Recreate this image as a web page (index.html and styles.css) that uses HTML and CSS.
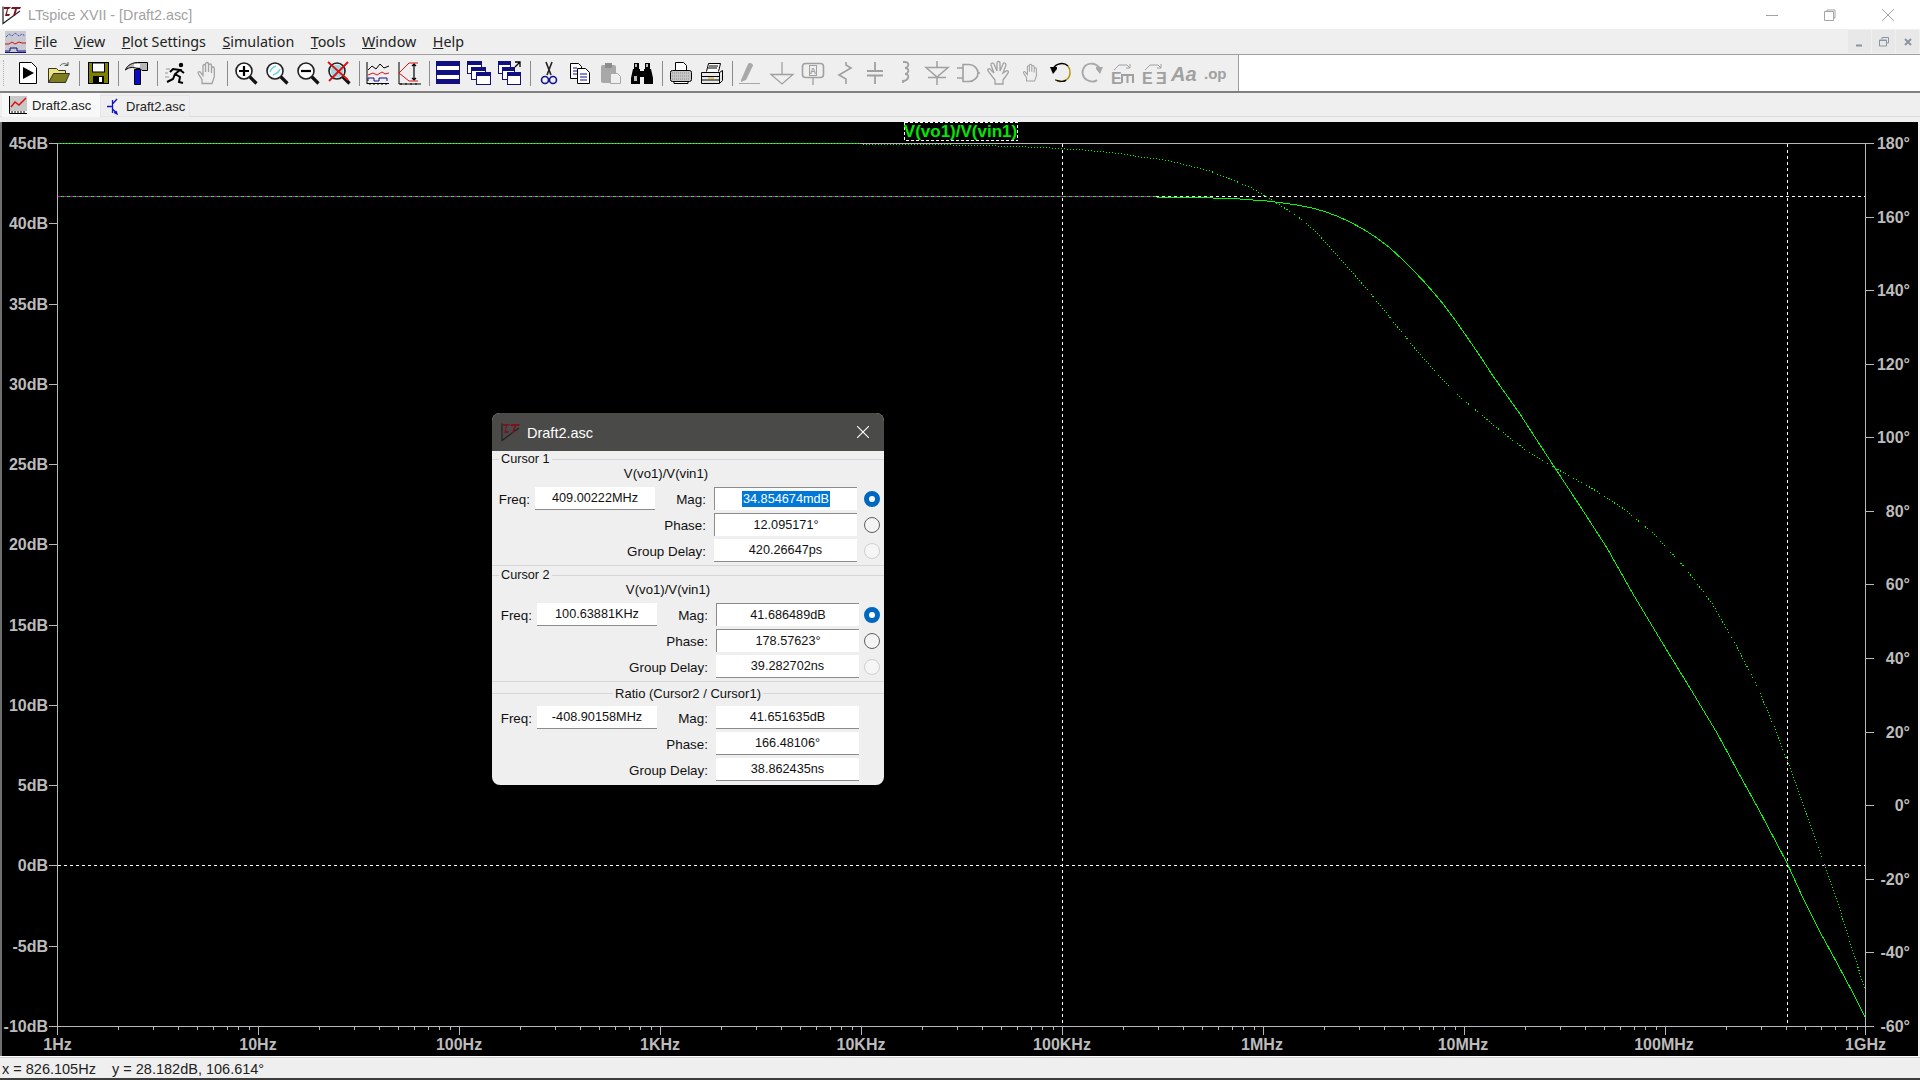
FILE: index.html
```html
<!DOCTYPE html>
<html lang="en">
	<head>
		<meta charset="UTF-8" />
		<title>LTspice XVII - [Draft2.asc]</title>
		<link rel="stylesheet" href="styles.css">
	</head>
	<body>
		<svg class="defs" width="0" height="0">
			<defs>
				<symbol id="logo" viewBox="0 0 20 20">
					<path d="M1 1.500v17L18 6" fill="none" stroke="#222" stroke-width="1.200"/>
					<path d="M2 2h7l-2 2h-1l-1 5h3l-1 2H3l2-7H2zM10 2h9l-1 2h-3l-2 7h-2l2-7h-4z" fill="#7a1420"/>
				</symbol>
				<symbol id="mag" viewBox="0 0 24 24">
					<path d="M15 15l7.500 7.500" stroke="#111" stroke-width="3.200"/>
					<circle cx="10" cy="10" r="8" fill="#fff" stroke="#222" stroke-width="1.600"/>
				</symbol>
				<symbol id="hand" viewBox="0 0 24 24">
					<path d="M7 22.500v-4L3.500 13c-1.200-2 .8-3.200 2-1.600L8 14.500V5c0-2 2.500-2 2.500 0v6V3c0-2 3-2 3 0v8V4.500c0-2 3-2 3 0V12V7.500c0-2 2.800-2 2.800 0V16l-2.300 6.500z" fill="#efefef" stroke="#a2a2a2" stroke-width="1.300"/>
				</symbol>
				<path id="decade" d="M60.500 0v3M95.800 0v3M120.900 0v3M140.400 0v3M156.300 0v3M169.800 0v3M181.400 0v3M191.700 0v3" stroke="#b9b9b9" fill="none"/>
			</defs>
		</svg>

		<header class="titlebar">
			<svg class="app-icon" width="20" height="20"><use href="#logo"/></svg>
			<span class="app-title">LTspice XVII - [Draft2.asc]</span>
			<div class="win-controls">
				<svg width="12" height="12" viewBox="0 0 12 12"><path d="M0 6.500h12" stroke="#a4a4a4"/></svg>
				<svg width="12" height="12" viewBox="0 0 12 12"><path d="M3 2V1h8v8h-1M.5 2.500h9v9h-9z" fill="none" stroke="#a4a4a4"/></svg>
				<svg width="12" height="12" viewBox="0 0 12 12"><path d="M0 0l12 12M12 0L0 12" stroke="#a4a4a4"/></svg>
			</div>
		</header>

		<nav class="menubar">
			<svg class="menu-icon" width="21" height="22" viewBox="0 0 21 22">
				<rect width="21" height="22" fill="#c9c9d2"/>
				<path d="M1 6l3-3 3 2 3-3 4 3 3-2 3 2" fill="none" stroke="#2020b0" stroke-dasharray="1 1"/>
				<path d="M0 13h4l3-2 3 2 4-2 3 1h4" fill="none" stroke="#d01010"/>
				<path d="M0 20h5v-3h7v3h9M0 21.500h21" fill="none" stroke="#101080"/>
			</svg>
			<span class="menu-item"><u>F</u>ile</span>
			<span class="menu-item"><u>V</u>iew</span>
			<span class="menu-item"><u>P</u>lot Settings</span>
			<span class="menu-item"><u>S</u>imulation</span>
			<span class="menu-item"><u>T</u>ools</span>
			<span class="menu-item"><u>W</u>indow</span>
			<span class="menu-item"><u>H</u>elp</span>
			<div class="mdi-controls">
				<span class="mdi-button"><svg width="10" height="10" viewBox="0 0 10 10"><path d="M1 8.500h6" stroke="#8b95a2" stroke-width="2"/></svg></span>
				<span class="mdi-button"><svg width="10" height="10" viewBox="0 0 10 10"><path d="M3 2V.500h6.500V6H8M.500 3h7v6h-7zM.500 3.500h7" fill="none" stroke="#8b95a2"/></svg></span>
				<span class="mdi-button"><svg width="10" height="10" viewBox="0 0 10 10"><path d="M2 2l6 6M8 2L2 8" stroke="#8b95a2" stroke-width="2"/></svg></span>
			</div>
		</nav>

		<div class="toolbar-row">
			<div class="toolbar">
				<span class="grip"></span>
				<span class="tool"><svg viewBox="0 0 24 24"><path d="M3.500 1.500h12l5 5v16h-17z" fill="#fff" stroke="#000"/><path d="M7 6l11 6-11 6z"/></svg></span>
				<span class="tool"><svg viewBox="0 0 24 24"><path d="M1.500 7.500h8l2 2h7v12h-17z" fill="#eee27a" stroke="#333"/><path d="M1.500 21.500l5-9h16l-4 9z" fill="#807c20" stroke="#333"/><path d="M13 5c2-3 5-3 8-1M21 1v3.500h-3.500" fill="none" stroke="#555"/></svg></span>
				<span class="sep"></span>
				<span class="tool"><svg viewBox="0 0 24 24"><rect x="2.500" y="1.500" width="20" height="21" fill="#808000" stroke="#000"/><rect x="6.500" y="2" width="12" height="9" fill="#fff" stroke="#000"/><rect x="7" y="15" width="11" height="7"/><rect x="13" y="16" width="3" height="5" fill="#fff"/></svg></span>
				<span class="sep"></span>
				<span class="tool"><svg viewBox="0 0 24 24"><path d="M.500 9C2 4 8 1 15 1.500h7.500v8H17l-2-2H12C8 6 4 6 .500 9z" fill="#b8b8b8" stroke="#000"/><path d="M9 3h6v3H9z" fill="#fff"/><path d="M9.500 8.500h6v15h-6z" fill="#0a0ac8" stroke="#000"/></svg></span>
				<span class="sep"></span>
				<span class="tool"><svg viewBox="0 0 24 24"><path d="M3 21l6-3 2-5 5-4-7-1-3 3M11 13l5 3-1 5 4 1M16 9l4 3" fill="none" stroke="#000" stroke-width="2"/><circle cx="17" cy="4" r="2.200"/><path d="M2 8h4M1 12h3M1 16h4" stroke="#999"/></svg></span>
				<span class="tool"><svg viewBox="0 0 24 24"><use href="#hand"/></svg></span>
				<span class="sep"></span>
				<span class="tool"><svg viewBox="0 0 24 24"><use href="#mag"/><path d="M5 10h10M10 5v10" stroke="#000" stroke-width="2.200"/></svg></span>
				<span class="tool"><svg viewBox="0 0 24 24"><use href="#mag"/><path d="M5 11c1-3 3-5 6-6M8 14c3-1 6-3 7-6" fill="none" stroke="#66d8e8" stroke-width="1.600"/></svg></span>
				<span class="tool"><svg viewBox="0 0 24 24"><use href="#mag"/><path d="M5 10h10" stroke="#000" stroke-width="2.200"/></svg></span>
				<span class="tool"><svg viewBox="0 0 24 24"><use href="#mag"/><circle cx="10" cy="10" r="6.500" fill="#9fd8e2"/><path d="M1 1l20 18M21 1L2 20" stroke="#e01010" stroke-width="1.800"/></svg></span>
				<span class="sep"></span>
				<span class="tool"><svg viewBox="0 0 24 24"><path d="M1 22.500h22M1 1v22M4 22v2M8 22v2M12 22v2M16 22v2M20 22v2" stroke="#000" fill="none"/><path d="M2 9l4-4 4 3 4-5 4 4 5-2" fill="none" stroke="#000"/><path d="M2 14l5-2 4 2 5-3 3 2 4-1" fill="none" stroke="#e01010"/><path d="M2 20v-3h6v3h5v-3h8v3" fill="none" stroke="#101090"/></svg></span>
				<span class="tool"><svg viewBox="0 0 24 24"><path d="M2 1v22h22M4 22v2M9 22v2M14 22v2M19 22v2" stroke="#000" fill="none"/><path d="M2 12L12 2h9M2 12l10 8h9" fill="none" stroke="#e01010"/><path d="M17 3v16M15 5l2-2 2 2M15 17l2 2 2-2" fill="none" stroke="#000" stroke-width="1.200"/></svg></span>
				<span class="sep"></span>
				<span class="tool"><svg viewBox="0 0 24 24"><rect x=".500" y=".500" width="23" height="22" fill="#fff" stroke="#101080"/><path d="M0 0h24v5H0zM0 9h24v5H0zM0 18h24v5H0z" fill="#101080"/></svg></span>
				<span class="tool"><svg viewBox="0 0 24 24"><rect x=".500" y=".500" width="14" height="12" fill="#fff" stroke="#101080"/><path d="M0 0h15v4H0z" fill="#101080"/><rect x="4.500" y="6.500" width="14" height="12" fill="#fff" stroke="#101080"/><path d="M4 6h15v4H4z" fill="#101080"/><rect x="9.500" y="11.500" width="14" height="12" fill="#fff" stroke="#101080"/><path d="M9 11h15v4H9z" fill="#101080"/></svg></span>
				<span class="tool"><svg viewBox="0 0 24 24"><rect x=".500" y=".500" width="12" height="12" fill="#fff" stroke="#101080"/><path d="M0 0h13v4H0z" fill="#101080"/><rect x="4.500" y="6.500" width="12" height="12" fill="#fff" stroke="#101080"/><path d="M4 6h13v4H4z" fill="#101080"/><rect x="9.500" y="11.500" width="13" height="12" fill="#fff" stroke="#101080"/><path d="M9 11h14v4H9z" fill="#101080"/><path d="M17 1h5v5M22 1l-5 5" fill="none" stroke="#000" stroke-width="1.300"/></svg></span>
				<span class="sep"></span>
				<span class="tool"><svg viewBox="0 0 24 24"><path d="M9 1l5 13M15 1l-5 13" stroke="#222" stroke-width="1.600"/><circle cx="8" cy="19" r="3.500" fill="none" stroke="#101090" stroke-width="1.600"/><circle cx="16" cy="19" r="3.500" fill="none" stroke="#101090" stroke-width="1.600"/></svg></span>
				<span class="tool"><svg viewBox="0 0 24 24"><path d="M2.500 2.500h8l3 3v12h-11z" fill="#fff" stroke="#000"/><path d="M9.500 7.500h8l4 4v11h-12z" fill="#fff" stroke="#000"/><path d="M5 7h4M5 10h4M5 13h4M12 13h7M12 16h7M12 19h7" stroke="#101090"/></svg></span>
				<span class="tool"><svg viewBox="0 0 24 24"><rect x="2" y="4" width="15" height="18" rx="2" fill="#a8a8a8"/><rect x="6" y="2" width="7" height="5" fill="#8c8c8c"/><path d="M11.500 12.500h7l3 3v7h-10z" fill="#efefef" stroke="#a8a8a8"/></svg></span>
				<span class="tool"><svg viewBox="0 0 24 24"><path d="M3 8h7v15H1v-6zM14 8h7l2 9v6h-9z"/><path d="M4 2h5v6H4zM15 2h5v6h-5zM10 10h4v6h-4z"/><path d="M5 3h2v3H5zM16 3h2v3h-2zM4 15h3v5H4z" fill="#bbb"/></svg></span>
				<span class="sep"></span>
				<span class="tool"><svg viewBox="0 0 24 24"><path d="M6.500 9.500v-8h8l3 3v5" fill="#fff" stroke="#000"/><rect x="1.500" y="9.500" width="21" height="11" rx="2" fill="#c8c8c8" stroke="#000"/><path d="M5 20.500h14v2H5z" fill="#fff" stroke="#000"/><path d="M3 12h18M3 15h18M3 18h18" stroke="#8a8a8a" stroke-dasharray="1 1"/></svg></span>
				<span class="tool"><svg viewBox="0 0 24 24"><path d="M6.500 10.500l2-8h12l-2 8" fill="#fff" stroke="#000"/><path d="M9 5h9M8 7h9" stroke="#000"/><path d="M1.500 11.500h18l3-2v10l-3 3h-18z" fill="#e8e8e8" stroke="#000"/><path d="M1.500 15.500h18M1.500 19h18M19.500 11.500v11" stroke="#000" fill="none"/><path d="M8 17h6" stroke="#e0c030" stroke-width="1.500"/></svg></span>
				<span class="sep"></span>
				<span class="tool"><svg viewBox="0 0 24 24"><path d="M2 19L9 3c1-2 5-1 5 1.500L7 19l-5 2z" fill="#a8a8a8"/><path d="M0 22.500h21" stroke="#a8a8a8"/></svg></span>
				<span class="tool"><svg viewBox="0 0 24 24"><path d="M12 1v12M1 13.500h22L12 23z" fill="none" stroke="#a0a0a0" stroke-width="1.300"/></svg></span>
				<span class="tool"><svg viewBox="0 0 24 24"><rect x="1.500" y="2.500" width="21" height="14" rx="3" fill="none" stroke="#a0a0a0" stroke-width="1.600"/><rect x="8.500" y="4.500" width="7" height="10" fill="none" stroke="#a0a0a0"/><text x="12" y="13" class="tool-letter">A</text><path d="M12 17v7" stroke="#a0a0a0" stroke-width="1.300"/></svg></span>
				<span class="tool"><svg viewBox="0 0 24 24"><path d="M14 1v3l5 3-12 7 7 4v5" fill="none" stroke="#a0a0a0" stroke-width="1.600"/></svg></span>
				<span class="tool"><svg viewBox="0 0 24 24"><path d="M12 1v8M12 15v8M4 10h16M4 14.500h16" fill="none" stroke="#a0a0a0" stroke-width="1.800"/></svg></span>
				<span class="tool"><svg viewBox="0 0 24 24"><path d="M9 1h2c3 0 4 2 3 4s-2 2-3 2c3 0 4 2 3 4s-2 2-3 2c3 0 4 2 3 4s-3 3-5 3v2" fill="none" stroke="#a0a0a0" stroke-width="1.800"/></svg></span>
				<span class="tool"><svg viewBox="0 0 24 24"><path d="M12 0v7M12 16v8M1 6.500h22L12 16zM3 16.500h18" fill="none" stroke="#a0a0a0" stroke-width="1.500"/></svg></span>
				<span class="tool"><svg viewBox="0 0 24 24"><path d="M1 7h6M1 17h6M7 3.500h6c5 0 9 4 9 8.500s-4 8.500-9 8.500H7zM22 12h2" fill="none" stroke="#a0a0a0" stroke-width="1.600"/></svg></span>
				<span class="tool"><svg viewBox="0 0 24 24"><path d="M8 23v-4L1 10c-1-2 1-3 2-2l4 4-3-8c-.5-2 2-2.500 3-1l3 7 0-8c0-2 3-2 3 0v8l3-7c1-2 3-1 3 1l-3 8 3-2c2-1 3 1 2 2l-5 7v4z" fill="#efefef" stroke="#a2a2a2" stroke-width="1.300"/></svg></span>
				<span class="tool"><svg viewBox="0 0 24 24"><g transform="translate(3 2) scale(.8)"><use href="#hand" width="24" height="24"/></g></svg></span>
				<span class="tool"><svg viewBox="0 0 24 24"><path d="M4 8c3-6 11-7 15-3" fill="none" stroke="#000" stroke-width="1.400"/><path d="M19 5c3 4 3 11-2 14s-9 1-10 0" fill="none" stroke="#b09000" stroke-width="1.400"/><path d="M7 19c-1 0 8 3 10 0" fill="none" stroke="#000" stroke-width="1.400"/><path d="M1 6h7v2l-4 5z"/></svg></span>
				<span class="tool"><svg viewBox="0 0 24 24"><path d="M20 8C17 2 9 1 5 5c-4 5-3 11 2 14s9 1 10 0" fill="none" stroke="#a8a8a8" stroke-width="1.800"/><path d="M23 6h-7v2l4 5z" fill="#a8a8a8"/></svg></span>
				<span class="tool"><svg viewBox="0 0 24 24"><text x="0" y="23" class="tool-text">E</text><path d="M11 22V14h11v8M16.500 14v8" fill="none" stroke="#a0a0a0" stroke-width="2"/><path d="M3 9l5-5h8l3 3M19 3v4h-4" fill="none" stroke="#a0a0a0"/></svg></span>
				<span class="tool"><svg viewBox="0 0 24 24"><text x="0" y="23" class="tool-text">E</text><text x="14" y="23" class="tool-text">Ǝ</text><path d="M3 9l5-5h8l3 3M19 3v4h-4" fill="none" stroke="#a0a0a0"/></svg></span>
				<span class="tool"><svg viewBox="0 0 24 24"><text x="-2" y="20" class="tool-italic">Aa</text></svg></span>
				<span class="tool"><svg viewBox="0 0 24 24"><text x="0" y="18" class="tool-op">.op</text></svg></span>
			</div>
			<div class="toolbar-rest"></div>
		</div>

		<div class="tabstrip">
			<span class="tab tab-active">
				<svg width="18" height="18" viewBox="0 0 18 18"><rect x="1" width="17" height="15" fill="#c8c8c8"/><path d="M2 11l4-5 4 3 7-7" fill="none" stroke="#e01010" stroke-width="1.500"/><path d="M.500 0v17.500H18M3 15v3M6 15v3M9 15v3M12 15v3M15 15v3" fill="none" stroke="#000"/></svg>
				Draft2.asc
			</span>
			<span class="tab">
				<svg width="14" height="18" viewBox="0 0 14 18"><path d="M6.500 3v13M1 9.500h5M6.500 7L11 2M6.500 12L11 16.500M8 15.500l3 1.500-1-3" fill="none" stroke="#1010d0" stroke-width="1.300"/></svg>
				Draft2.asc
			</span>
		</div>

		<main class="plot-pane">
			<svg class="plot" viewBox="2 122 1916 934" width="1916" height="934">
				<g class="axes" fill="none" stroke="#b9b9b9" shape-rendering="crispEdges">
					<rect x="57.500" y="143.500" width="1808" height="883"/>
					<path d="M49 143.500h8M49 223.500h8M49 304.500h8M49 384.500h8M49 464.500h8M49 544.500h8M49 625.500h8M49 705.500h8M49 785.500h8M49 865.500h8M49 946.500h8M49 1026.500h8"/>
					<path d="M1866 143.500h8M1866 217.500h8M1866 290.500h8M1866 364.500h8M1866 437.500h8M1866 511.500h8M1866 584.500h8M1866 658.500h8M1866 732.500h8M1866 805.500h8M1866 879.500h8M1866 952.500h8M1866 1026.500h8"/>
					<path d="M57.500 1027v8M258.500 1027v8M459.500 1027v8M660.500 1027v8M861.500 1027v8M1062.500 1027v8M1263.500 1027v8M1464.500 1027v8M1665.500 1027v8M1865.500 1027v8"/>
				</g>
				<g shape-rendering="crispEdges">
					<use href="#decade" x="57.500" y="1027"/>
					<use href="#decade" x="258.500" y="1027"/>
					<use href="#decade" x="459.500" y="1027"/>
					<use href="#decade" x="660.500" y="1027"/>
					<use href="#decade" x="861.500" y="1027"/>
					<use href="#decade" x="1062.500" y="1027"/>
					<use href="#decade" x="1263.500" y="1027"/>
					<use href="#decade" x="1464.500" y="1027"/>
					<use href="#decade" x="1665.500" y="1027"/>
				</g>

				<g class="label-left">
					<text x="48" y="149">45dB</text>
					<text x="48" y="229">40dB</text>
					<text x="48" y="310">35dB</text>
					<text x="48" y="390">30dB</text>
					<text x="48" y="470">25dB</text>
					<text x="48" y="550">20dB</text>
					<text x="48" y="631">15dB</text>
					<text x="48" y="711">10dB</text>
					<text x="48" y="791">5dB</text>
					<text x="48" y="871">0dB</text>
					<text x="48" y="952">-5dB</text>
					<text x="48" y="1032">-10dB</text>
				</g>
				<g class="label-right">
					<text x="1910" y="149">180°</text>
					<text x="1910" y="223">160°</text>
					<text x="1910" y="296">140°</text>
					<text x="1910" y="370">120°</text>
					<text x="1910" y="443">100°</text>
					<text x="1910" y="517">80°</text>
					<text x="1910" y="590">60°</text>
					<text x="1910" y="664">40°</text>
					<text x="1910" y="738">20°</text>
					<text x="1910" y="811">0°</text>
					<text x="1910" y="885">-20°</text>
					<text x="1910" y="958">-40°</text>
					<text x="1910" y="1032">-60°</text>
				</g>
				<g class="label-bottom">
					<text x="57.500" y="1050">1Hz</text>
					<text x="258" y="1050">10Hz</text>
					<text x="459" y="1050">100Hz</text>
					<text x="660" y="1050">1KHz</text>
					<text x="861" y="1050">10KHz</text>
					<text x="1062" y="1050">100KHz</text>
					<text x="1262" y="1050">1MHz</text>
					<text x="1463" y="1050">10MHz</text>
					<text x="1664" y="1050">100MHz</text>
					<text x="1865.500" y="1050">1GHz</text>
				</g>

				<g shape-rendering="crispEdges" fill="none">
					<path d="M58 143.500H860" stroke="#00e800" stroke-dasharray="2 1"/>
					<path d="M58 196.500H1156" stroke="#00ff00"/>
					<path d="M58 196.500H1156" stroke="#d000d0" stroke-dasharray="3 3"/>
					<path d="M1156 196.500H1865M58 865.500H1865M1062.500 144V1026M1787.500 144V1026" stroke="#fff" stroke-dasharray="3 3"/>
					<!-- magnitude -->
					<polyline stroke="#00ff00" points="1156,197 1213,198 1240,199 1253,200 1267,201 1283,203 1297,205 1310,207.500 1323,211 1337,216 1350,222 1363,229 1377,238 1390,248 1403,260 1413,270 1423,280.500 1440,300 1453,317 1467,337 1480,356 1493,376 1520,414 1540,445 1555,468 1580,506 1607,548 1633,594 1663,644 1690,688 1717,733 1743,781 1758,808 1787,863 1803,898 1820,932 1837,963 1853,993 1865,1017"/>
					<!-- phase -->
					<polyline stroke="#00ff00" stroke-dasharray="1 2" points="860,144 953,145 998,146 1027,147 1050,148 1067,149 1083,150 1105,152 1123,154 1140,157 1150,158 1170,161 1190,166 1210,171 1230,179 1250,187 1267,197 1283,207 1297,216 1317,233 1337,255 1359,280 1380,305 1400,330 1417,351 1437,374 1457,394 1480,414 1507,436 1530,453 1555,468 1593,489 1627,511 1657,537 1687,570 1713,605 1737,647 1757,686 1773,724 1787,760 1799,793 1809,820 1825,865 1840,910 1853,952 1865,989"/>
					<path d="M1787 760h1v1h-1zM1824 865h2v1h-2z" fill="#e000e0"/>
				</g>

				<rect class="trace-box" x="904.500" y="122.500" width="113" height="18"/>
				<text class="trace-tag" x="960.500" y="137">V(vo1)/V(vin1)</text>
			</svg>

			<section class="cursor-window">
				<div class="cursor-titlebar">
					<svg width="20" height="20"><use href="#logo"/></svg>
					<span class="cursor-title">Draft2.asc</span>
					<svg class="cursor-close" width="12" height="12" viewBox="0 0 12 12"><path d="M0 0l12 12M12 0L0 12" stroke="#fff" stroke-width="1.100"/></svg>
				</div>

				<div class="readout first">
					<div class="group-title">Cursor 1</div>
					<div class="trace-name">V(vo1)/V(vin1)</div>
					<div class="readout-grid">
						<span class="lbl">Freq:</span><span class="field">409.00222MHz</span><span class="lbl">Mag:</span><span class="field inset"><span class="selected">34.854674mdB</span></span><span class="radio on"></span>
						<span class="lbl wide">Phase:</span><span class="field inset">12.095171°</span><span class="radio"></span>
						<span class="lbl wide">Group Delay:</span><span class="field">420.26647ps</span><span class="radio off"></span>
					</div>
				</div>

				<div class="readout second shifted">
					<div class="group-title">Cursor 2</div>
					<div class="trace-name">V(vo1)/V(vin1)</div>
					<div class="readout-grid">
						<span class="lbl">Freq:</span><span class="field">100.63881KHz</span><span class="lbl">Mag:</span><span class="field inset">41.686489dB</span><span class="radio on"></span>
						<span class="lbl wide">Phase:</span><span class="field inset">178.57623°</span><span class="radio"></span>
						<span class="lbl wide">Group Delay:</span><span class="field">39.282702ns</span><span class="radio off"></span>
					</div>
				</div>

				<div class="readout third shifted">
					<div class="group-title centered">Ratio (Cursor2 / Cursor1)</div>
					<div class="readout-grid">
						<span class="lbl">Freq:</span><span class="field">-408.90158MHz</span><span class="lbl">Mag:</span><span class="field">41.651635dB</span><span></span>
						<span class="lbl wide">Phase:</span><span class="field">166.48106°</span><span></span>
						<span class="lbl wide">Group Delay:</span><span class="field">38.862435ns</span><span></span>
					</div>
				</div>
			</section>
		</main>

		<footer class="statusbar">x = 826.105Hz    y = 28.182dB, 106.614°</footer>
	</body>
</html>
```
FILE: styles.css
```css
/* LTspice main window */
* {
	box-sizing: border-box;
}
body {
	margin: 0;
	height: 1080px;
	overflow: hidden;
	display: flex;
	flex-direction: column;
	font-family: "Liberation Sans", Arial, sans-serif;
	background-color: #efefef;
}
.defs {
	position: absolute;
}

.titlebar {
	height: 29px;
	background-color: #fff;
	display: flex;
	align-items: center;
	padding-left: 2px;
	flex: none;
}
.app-icon {
	margin-right: 6px;
}
.app-title {
	font-size: 14.3px;
	color: #a2a2a2;
}
.win-controls {
	margin-left: auto;
	display: flex;
	gap: 46px;
	padding-right: 26px;
}

.menubar {
	height: 26px;
	flex: none;
	display: flex;
	align-items: center;
	padding-left: 5px;
	border-bottom: 1px solid #a0a0a0;
	font-family: "Noto Sans", sans-serif;
	font-size: 14.3px;
	color: #222;
	gap: 16.5px;
}
.menu-icon {
	margin-right: -8px;
}
.mdi-controls {
	margin-left: auto;
	display: flex;
	gap: 1px;
	padding-right: 1px;
}
.mdi-button {
	width: 23px;
	height: 23px;
	background-color: #e8e8e8;
	display: flex;
	align-items: center;
	justify-content: center;
}

.toolbar-row {
	height: 38px;
	flex: none;
	display: flex;
	border-bottom: 2px solid #808080;
}
.toolbar {
	width: 1239px;
	display: flex;
	align-items: center;
	border-right: 1px solid #a0a0a0;
}
.toolbar-rest {
	flex: 1;
	background-color: #fff;
}
.grip {
	width: 3px;
	height: 26px;
	margin: 0 6.5px 0 3px;
	border-left: 1px dotted #b0b0b0;
}
.tool {
	width: 31px;
	height: 36px;
	display: flex;
	align-items: center;
	justify-content: center;
}
.tool svg {
	width: 24px;
	height: 24px;
	overflow: visible;
}
.sep {
	width: 1px;
	height: 25px;
	margin: 0 3px 0 4px;
	background-color: #8c8c8c;
}
.tool-letter {
	font: bold 9px "Liberation Sans", sans-serif;
	fill: #a0a0a0;
	text-anchor: middle;
}
.tool-text {
	font: bold 16px "Liberation Sans", sans-serif;
	fill: #a0a0a0;
}
.tool-italic {
	font: italic bold 20px "Liberation Sans", sans-serif;
	fill: #a0a0a0;
}
.tool-op {
	font: bold 15px "Liberation Sans", sans-serif;
	fill: #a0a0a0;
}

.tabstrip {
	height: 29px;
	flex: none;
	display: flex;
	align-items: flex-start;
	font-size: 13px;
	color: #222;
	box-shadow: inset 0 -5px 0 #efefef, inset 0 -6px 0 #dcdcdc;
	padding-left: 2px;
}
.tab {
	height: 22px;
	margin-top: 2px;
	width: 90px;
	display: flex;
	align-items: center;
	gap: 6px;
	padding-left: 5px;
	border: 1px solid #e6e6e6;
}
.tab-active {
	height: 24px;
	margin-top: 0;
	width: 98px;
	padding-left: 7px;
	gap: 5px;
	background-color: #f8f8f8;
	border: none;
}

.plot-pane {
	flex: 1;
	position: relative;
	background-color: #000;
	border-left: 2px solid #6e6e6e;
	border-right: 2px solid #f4f4f4;
	overflow: hidden;
}
.plot {
	display: block;
}
.plot text {
	font-family: "Liberation Sans", Arial, sans-serif;
	font-weight: bold;
	font-size: 16px;
}
.label-left text,
.label-right text,
.label-bottom text {
	fill: #bcbcbc;
}
.label-left text,
.label-right text {
	text-anchor: end;
}
.label-bottom text {
	text-anchor: middle;
}
.plot .trace-tag {
	font-size: 17px;
	fill: #00e800;
	text-anchor: middle;
}
.trace-box {
	fill: none;
	stroke: #fff;
	stroke-dasharray: 3 2;
	shape-rendering: crispEdges;
}

/* Cursor readout window */
.cursor-window {
	position: absolute;
	left: 490px;
	top: 291px;
	width: 392px;
	height: 372px;
	border-radius: 8px;
	overflow: hidden;
	background-color: #efefef;
	font-size: 12.7px;
	color: #111;
}
.cursor-titlebar {
	height: 38px;
	background-color: #4a4a48;
	display: flex;
	align-items: center;
	padding-left: 9px;
	color: #fff;
}
.cursor-title {
	font-size: 14.5px;
	margin-left: 6px;
	padding-top: 1px;
}
.cursor-close {
	margin-left: auto;
	margin-right: 15px;
}
.readout {
	padding-left: 6px;
}
.readout.shifted {
	padding-left: 8px;
}
.first,
.second {
	border-bottom: 1px solid #d6d6d6;
}
.second {
	padding-top: 1px;
}
.third {
	padding-top: 3px;
}
.group-title {
	height: 16px;
	margin-left: -6px;
	display: flex;
	align-items: center;
	gap: 2px;
}
.shifted .group-title {
	margin-left: -8px;
}
.group-title::before,
.group-title::after {
	content: "";
	height: 1px;
	background-color: #d6d6d6;
}
.group-title::before {
	width: 7px;
}
.group-title::after {
	flex: 1;
}
.group-title.centered {
	font-size: 13px;
}
.group-title.centered::before {
	flex: 1;
	width: auto;
}
.trace-name {
	height: 14px;
	line-height: 14px;
	font-size: 13.2px;
	text-align: center;
	width: 336px;
	margin-bottom: 6px;
}
.third .group-title {
	margin-bottom: 5px;
}
.readout-grid {
	display: grid;
	grid-template-columns: 37px 120px 59px 143px 30px;
	grid-auto-rows: 26px;
}
.shifted .readout-grid {
	grid-template-columns: 37px 120px 59px 143px 26px;
}
.lbl {
	height: 23px;
	display: flex;
	align-items: center;
	justify-content: flex-end;
	padding: 1px 8px 0 0;
	font-size: 13.4px;
	white-space: nowrap;
}
.lbl:first-child {
	padding-right: 5px;
}
.lbl.wide {
	grid-column: 1 / 4;
}
.field {
	height: 23px;
	display: flex;
	align-items: center;
	justify-content: center;
	background-color: #fff;
	border-bottom: 1px solid #8c8c8c;
}
.field.inset {
	border-bottom: none;
	border-top: 1px solid #8c8c8c;
	border-left: 1px solid #8c8c8c;
}
.selected {
	background-color: #0078d7;
	color: #fff;
	padding: 1px;
}
.radio {
	width: 16px;
	height: 16px;
	margin-top: 4px;
	justify-self: center;
	border-radius: 50%;
	border: 1.5px solid #5f5f5f;
	background-color: #f4f4f4;
}
.radio.off {
	border-color: #cfcfcf;
	background-color: #f6f6f6;
}
.radio.on {
	border: 5px solid #0067c0;
	background-color: #fff;
}

.statusbar {
	height: 24px;
	flex: none;
	border-top: 1px solid #fff;
	box-shadow: inset 0 1px 0 #cfcfcf;
	border-bottom: 2px solid #3c3c3c;
	padding: 4px 0 0 2px;
	font-size: 14.5px;
	line-height: 17px;
	color: #222;
	white-space: pre;
}
```
